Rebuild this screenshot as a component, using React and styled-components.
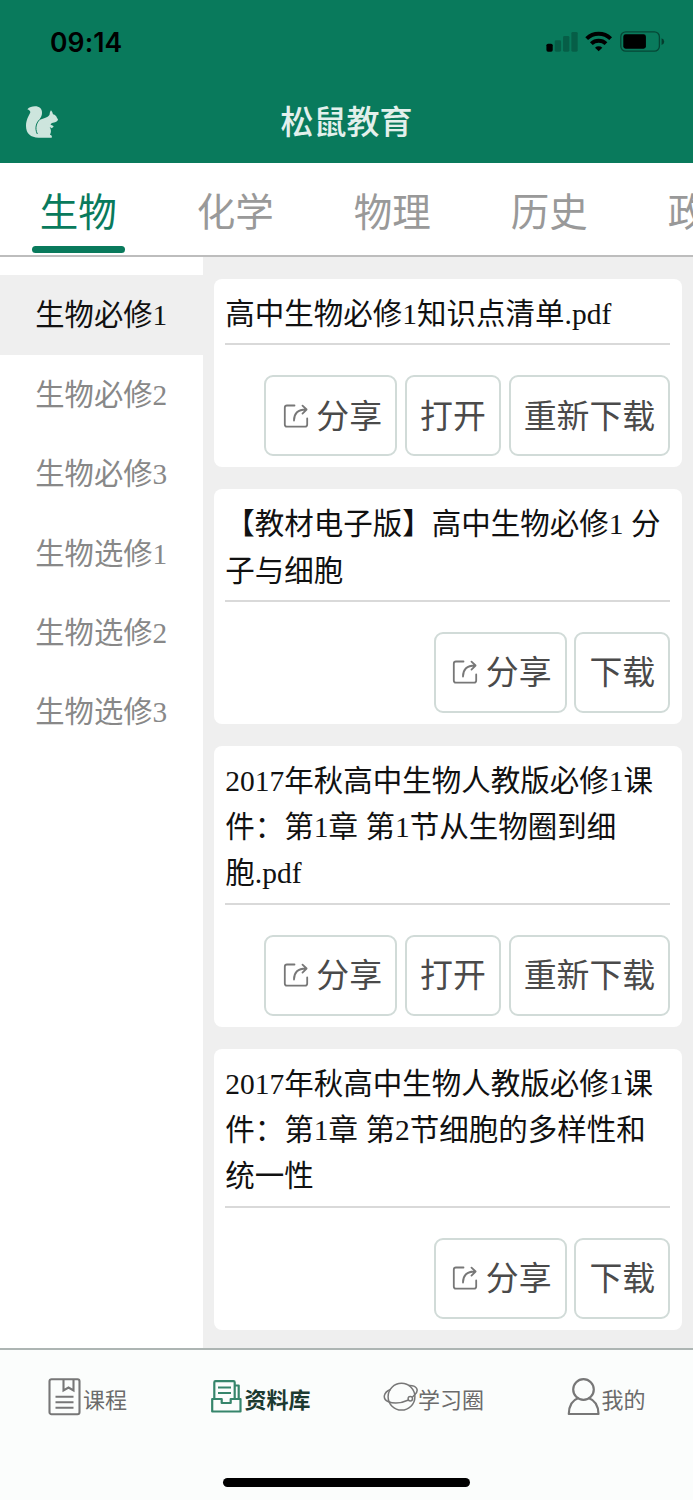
import React from 'react';
import styled, { createGlobalStyle } from 'styled-components';

const green = '#097a5c';
const grey = '#efefef';
const white = '#fff';

const GlobalStyle = createGlobalStyle`
  * {
    box-sizing: border-box;
  }

  body {
    margin: 0;
    font-family: 'Liberation Serif', 'Noto Sans CJK SC', serif;
    text-spacing-trim: space-all;
    -webkit-font-smoothing: antialiased;
  }
`;

const Screen = styled.div`
  width: 693px;
  height: 1500px;
  display: flex;
  flex-direction: column;
  overflow: hidden;
  background: ${white};
`;

const Header = styled.header`
  flex: none;
  height: 162.5px;
  background: ${green};
`;

const StatusBar = styled.div`
  height: 81px;
  padding: 3px 26.7px 0 50px;
  display: flex;
  align-items: center;
  justify-content: space-between;
`;

const Time = styled.span`
  font: 600 26.5px/32px Inter, sans-serif;
  letter-spacing: 0.1px;
  color: #000;
`;

const TitleBar = styled.div`
  height: 81px;
  padding: 0 24px;
  display: grid;
  grid-template-columns: 36px 1fr 36px;
  align-items: center;
`;

const Title = styled.h1`
  margin: 0;
  padding-bottom: 4px;
  font: 500 33px/46px 'Noto Sans CJK SC', sans-serif;
  text-align: center;
  color: #e3f0ec;
`;

const Tabs = styled.nav`
  flex: none;
  height: 94.5px;
  display: flex;
  border-bottom: 2px solid #bdbdbd;
`;

const Tab = styled.a`
  flex: none;
  width: 157px;
  display: flex;
  flex-direction: column;
  align-items: center;
  justify-content: flex-end;
  padding: 0 0.5px 2px 0;
  font: 400 38.5px/58px 'Noto Sans CJK SC', sans-serif;
  color: ${({ $active }) => ($active ? green : '#999')};

  &::after {
    content: '';
    width: 92.5px;
    height: 7.5px;
    margin-top: 8px;
    border-radius: 4px;
    background: ${({ $active }) => ($active ? green : 'transparent')};
  }
`;

const Content = styled.main`
  flex: none;
  height: 1091px;
  display: flex;
`;

const Sidebar = styled.aside`
  flex: none;
  width: 203.3px;
  padding-top: 18.4px;
`;

const SidebarItem = styled.div`
  height: 79.4px;
  padding-left: 35.3px;
  font-size: 29.3px;
  line-height: 80px;
  color: ${({ $active }) => ($active ? '#111' : '#888')};
  background: ${({ $active }) => ($active ? grey : 'transparent')};
`;

const List = styled.section`
  flex: 1;
  display: flex;
  flex-direction: column;
  gap: 22px;
  padding: 22px 11px 0;
  background: ${grey};
`;

const Card = styled.article`
  padding: 11px 11.6px 11px 11px;
  border-radius: 8px;
  background: ${white};
`;

const CardTitle = styled.h2`
  margin: 0;
  padding: 1px 0 6.2px;
  border-bottom: 2px solid #d9d9d9;
  font-size: 29.5px;
  font-weight: 400;
  line-height: 46.2px;
  color: #111;
`;

const Actions = styled.div`
  display: flex;
  justify-content: flex-end;
  gap: 7.7px;
  padding-top: 30px;
`;

const Button = styled.button`
  height: 81px;
  display: flex;
  align-items: center;
  padding: 0 13.2px 4px 13px;
  border: 2px solid #d1dbd8;
  border-radius: 9px;
  background: ${white};
  font: 400 32.9px/48px 'Noto Sans CJK SC', sans-serif;
  color: #4a4a4a;
  white-space: nowrap;

  svg {
    margin: 4px 7.5px 0 3.5px;
  }
`;

const BottomBar = styled.footer`
  flex: 1;
  display: flex;
  flex-direction: column;
  justify-content: space-between;
  border-top: 2px solid #adb5b3;
  background: #fbfdfc;
`;

const BottomTabs = styled.nav`
  display: grid;
  grid-template-columns: repeat(4, 1fr);
  padding: 23px 0 0 1px;
`;

const BottomTab = styled.a`
  height: 48px;
  display: flex;
  align-items: center;
  justify-content: center;
  font: ${({ $active }) => ($active ? 700 : 400)} 22px/32px 'Noto Sans CJK SC', sans-serif;
  color: ${({ $active }) => ($active ? '#1c3a31' : '#6b6b6b')};

  span {
    padding-top: 1px;
  }
`;

const HomeIndicator = styled.div`
  width: 247px;
  height: 9px;
  margin: 0 auto 13.5px;
  border-radius: 5px;
  background: #000;
`;

const StatusIcons = () => (
  <svg width="123.3" height="23.3" viewBox="600 90 370 70">
    <rect x="610" y="131" width="19" height="24" rx="5" />
    <g opacity="0.22">
      <rect x="635" y="121" width="19" height="34" rx="4" />
      <rect x="660" y="108" width="19" height="47" rx="4" />
      <rect x="685" y="96" width="19" height="59" rx="4" />
    </g>
    <g fill="none" stroke="#000" strokeWidth="12">
      <path d="M731 116a52 52 0 0 1 72 0" />
      <path d="M745 131a32 32 0 0 1 44 0" />
    </g>
    <path d="M767 154l-11-11a16 16 0 0 1 22 0z" />
    <rect x="833.5" y="95.5" width="116" height="58" rx="15" fill="none" stroke="#000" strokeOpacity="0.42" strokeWidth="4" />
    <rect x="841" y="103" width="68" height="43" rx="7" />
    <path d="M956 115q8 3 8 10t-8 10z" opacity="0.5" />
  </svg>
);

const SquirrelIcon = () => (
  <svg width="36" height="36" viewBox="72 312 108 108">
    <path
      fill="#cde5dd"
      d="M82 328C88 321 96 319 105 319C118 319 127 327 126 339C126 346 123 351 119 358L124 358C136 353 146 352 149 343C149 338 151 334 153 331C156 334 158 338 159 343C166 345 170 349 171 354L174 358C174 364 168 367 159 368C155 369 152 371 152 374L159 377L161 380L155 385L149 381C154 389 154 397 150 404C155 405 157 408 155 413H116C92 413 78 400 78 378C78 360 85 351 91 337C91 332 87 330 82 328Z"
    />
    <path d="M125 354C109 364 103 384 112 402" fill="none" stroke={green} strokeWidth="3" />
  </svg>
);

const ShareIcon = () => (
  <svg width="26" height="26" viewBox="0 0 26 26" fill="none" stroke="#777" strokeWidth="1.8" strokeLinecap="round" strokeLinejoin="round">
    <path d="M11.5 2.5H4Q1.8 2.5 1.8 4.7V21.5Q1.8 23.7 4 23.7H22Q24.2 23.7 24.2 21.5V15.5" />
    <path d="M11 17.5C11 11 14.5 6.5 23 6.5M19.5 2.6L23.6 6.5L19.5 10.6" />
  </svg>
);

const CourseIcon = () => (
  <svg width="35" height="38" viewBox="0 0 35 38" fill="none" stroke="#777" strokeWidth="2.1">
    <rect x="1.5" y="1.2" width="30" height="35" rx="2" />
    <path d="M15.5 1.5V12.5L20.5 9.5L25.5 12.5V1.5M7.5 18.7H25.5M7.5 24.2H25.5M7.5 29.7H25.5" />
  </svg>
);

const LibraryIcon = () => (
  <svg width="34" height="38" viewBox="0 0 34 38" fill="none" stroke="#36856b" strokeWidth="2.2" strokeLinejoin="round">
    <path d="M4.3 20V4.5Q4.3 3.2 5.5 3.2H23.5Q24.7 3.2 24.7 4.5V20M24.7 7.5H28.7V20.5" />
    <path d="M8 9.5H21M8 15H21" />
    <path d="M2.2 21H11.7V25H20.7V21H30.5V33.5H2.2Z" />
  </svg>
);

const CircleIcon = () => (
  <svg width="35" height="38" viewBox="0 0 35 38" fill="none" stroke="#777" strokeWidth="1.5">
    <circle cx="18.5" cy="18.7" r="13.4" />
    <path d="M7.5 11.5C0 14.5 -0.5 21 5 23.5C12 26.5 20 24.5 25.5 22" />
    <path d="M25.5 7.5C33.5 7 36.5 12 32 16.5L29 19.5" />
    <circle cx="27.3" cy="20.7" r="2.2" fill="#fbfdfc" />
  </svg>
);

const MineIcon = () => (
  <svg width="34" height="38" viewBox="0 0 34 38" fill="none" stroke="#777" strokeWidth="2.2" strokeLinejoin="round">
    <circle cx="16.5" cy="11.5" r="10.3" />
    <path d="M11.5 20C5.5 22 2 28 1.8 36H31.5C31.3 28 27.5 22 21.5 20" />
  </svg>
);

const subjects = ['生物', '化学', '物理', '历史', '政治'];

const books = ['生物必修1', '生物必修2', '生物必修3', '生物选修1', '生物选修2', '生物选修3'];

const files = [
  { title: '高中生物必修1知识点清单.pdf', downloaded: true },
  { title: '【教材电子版】高中生物必修1 分子与细胞', downloaded: false },
  { title: '2017年秋高中生物人教版必修1课件：第1章 第1节从生物圈到细胞.pdf', downloaded: true },
  { title: '2017年秋高中生物人教版必修1课件：第1章 第2节细胞的多样性和统一性', downloaded: false }
];

const bottomTabs = [
  { label: '课程', Icon: CourseIcon },
  { label: '资料库', Icon: LibraryIcon, active: true },
  { label: '学习圈', Icon: CircleIcon },
  { label: '我的', Icon: MineIcon }
];

const FileCard = ({ title, downloaded }) => (
  <Card>
    <CardTitle>{title}</CardTitle>
    <Actions>
      <Button>
        <ShareIcon />
        分享
      </Button>
      {downloaded && <Button>打开</Button>}
      <Button>{downloaded ? '重新下载' : '下载'}</Button>
    </Actions>
  </Card>
);

const App = () => (
  <Screen>
    <GlobalStyle />
    <Header>
      <StatusBar>
        <Time>09:14</Time>
        <StatusIcons />
      </StatusBar>
      <TitleBar>
        <SquirrelIcon />
        <Title>松鼠教育</Title>
      </TitleBar>
    </Header>
    <Tabs>
      {subjects.map((subject, i) => (
        <Tab key={subject} $active={i === 0}>
          {subject}
        </Tab>
      ))}
    </Tabs>
    <Content>
      <Sidebar>
        {books.map((book, i) => (
          <SidebarItem key={book} $active={i === 0}>
            {book}
          </SidebarItem>
        ))}
      </Sidebar>
      <List>
        {files.map(file => (
          <FileCard key={file.title} {...file} />
        ))}
      </List>
    </Content>
    <BottomBar>
      <BottomTabs>
        {bottomTabs.map(({ label, Icon, active }) => (
          <BottomTab key={label} $active={active}>
            <Icon />
            <span>{label}</span>
          </BottomTab>
        ))}
      </BottomTabs>
      <HomeIndicator />
    </BottomBar>
  </Screen>
);

export default App;
